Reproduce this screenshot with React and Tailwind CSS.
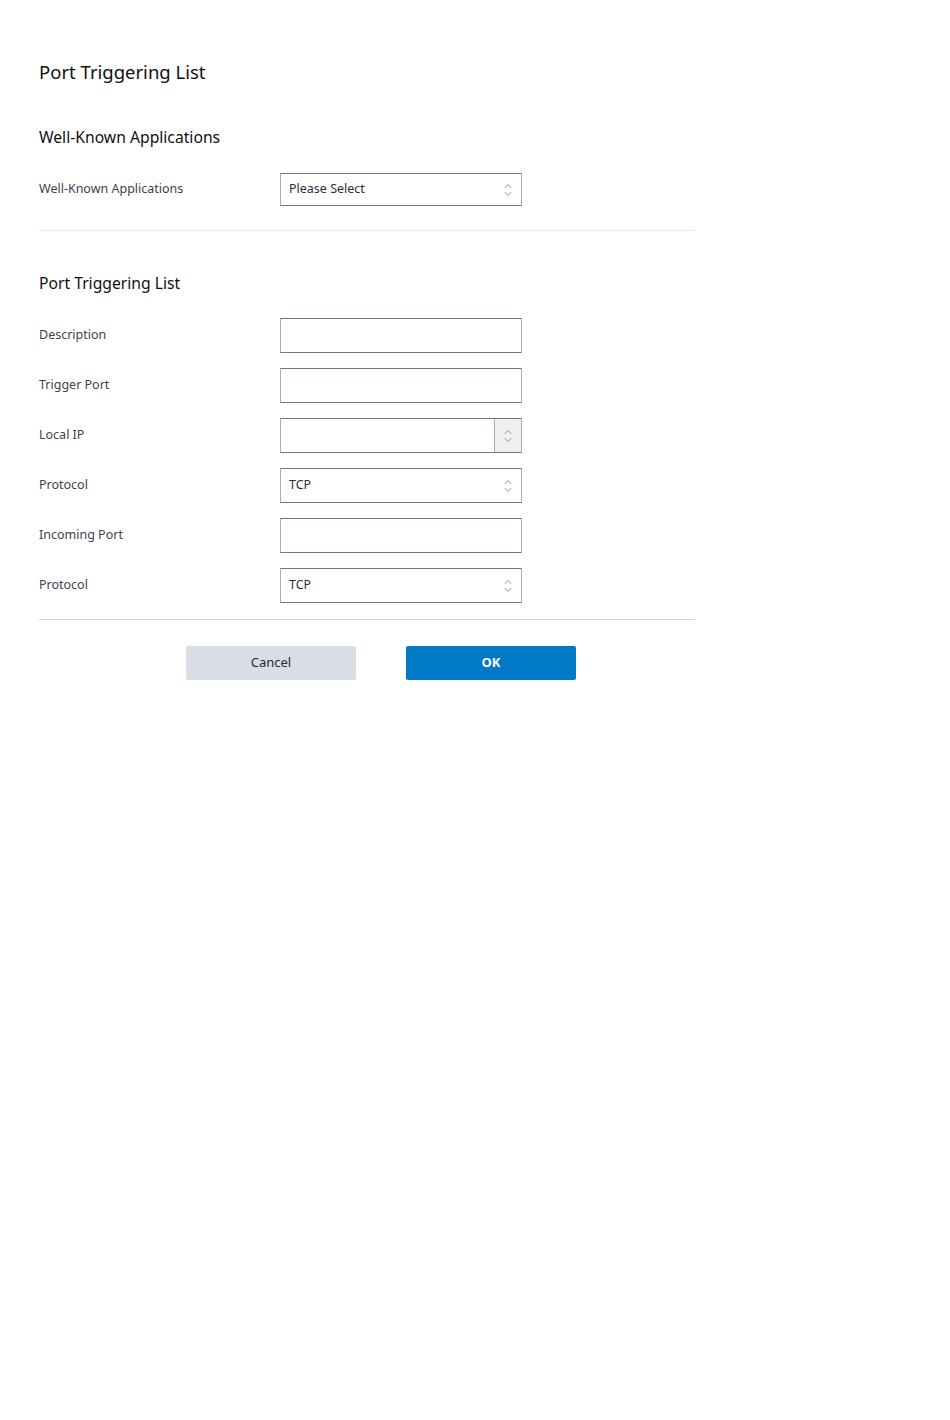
import React from 'react';

const Chevrons = () => (
  <svg width="8" height="14" viewBox="0 0 8 14" fill="none" stroke="#8a93a0" strokeWidth="1" strokeLinecap="round" strokeLinejoin="round">
    <path d="M1 4.5 L4 1.5 L7 4.5" />
    <path d="M1 9.5 L4 12.5 L7 9.5" />
  </svg>
);

const boxBorder = 'border-y border-y-[#6b7585] border-x border-x-[#a7afbb]';

const TextInput = () => (
  <input type="text" className={`w-[242px] h-[35px] px-2 bg-white outline-none text-[13px] ${boxBorder}`} />
);

const SelectBox = ({ value, height = 'h-[35px]' }) => (
  <div className={`w-[242px] ${height} flex items-center justify-between pl-2 pr-[9px] bg-white ${boxBorder}`}>
    <span className="text-[12.5px] text-[#2a2f36]">{value}</span>
    <Chevrons />
  </div>
);

const ComboBox = () => (
  <div className={`w-[242px] h-[35px] flex bg-white ${boxBorder}`}>
    <input type="text" className="flex-1 min-w-0 px-2 outline-none text-[13px]" />
    <div className="w-[27px] flex items-center justify-center bg-[#f0f0f0] border-l border-l-[#a7afbb]">
      <Chevrons />
    </div>
  </div>
);

const Row = ({ label, children }) => (
  <div className="flex items-center h-[35px]">
    <div className="w-[241px] text-[12.5px] text-[#3d434c]">{label}</div>
    {children}
  </div>
);

export default function App() {
  return (
    <div className="bg-white min-h-[1420px] pl-[39px] pt-[58px]" style={{ fontFamily: '"Noto Sans", "Open Sans", sans-serif' }}>
      <div className="w-[656px]">
        <h1 className="text-[18.5px] leading-[28px] text-[#111]">Port Triggering List</h1>

        <h2 className="mt-[39px] text-[15.7px] leading-[24px] text-[#111]">Well-Known Applications</h2>
        <div className="mt-[23px]">
          <Row label="Well-Known Applications">
            <SelectBox value="Please Select" height="h-[33px]" />
          </Row>
        </div>
        <div className="mt-[23px] border-t border-[#e8e8e8]" />

        <h2 className="mt-[40px] text-[15.7px] leading-[24px] text-[#111]">Port Triggering List</h2>
        <div className="mt-[23px] flex flex-col gap-[15px]">
          <Row label="Description"><TextInput /></Row>
          <Row label="Trigger Port"><TextInput /></Row>
          <Row label="Local IP"><ComboBox /></Row>
          <Row label="Protocol"><SelectBox value="TCP" /></Row>
          <Row label="Incoming Port"><TextInput /></Row>
          <Row label="Protocol"><SelectBox value="TCP" /></Row>
        </div>
        <div className="mt-[16px] border-t border-[#d6d6d6]" />

        <div className="mt-[26px] flex gap-[50px] pl-[147px]">
          <button className="w-[170px] h-[34px] rounded-[2px] bg-[#d9dde4] text-[13px] text-[#1f2a38]">Cancel</button>
          <button className="w-[170px] h-[34px] rounded-[2px] bg-[#0079c6] text-[13px] font-bold text-white">OK</button>
        </div>
      </div>
    </div>
  );
}
